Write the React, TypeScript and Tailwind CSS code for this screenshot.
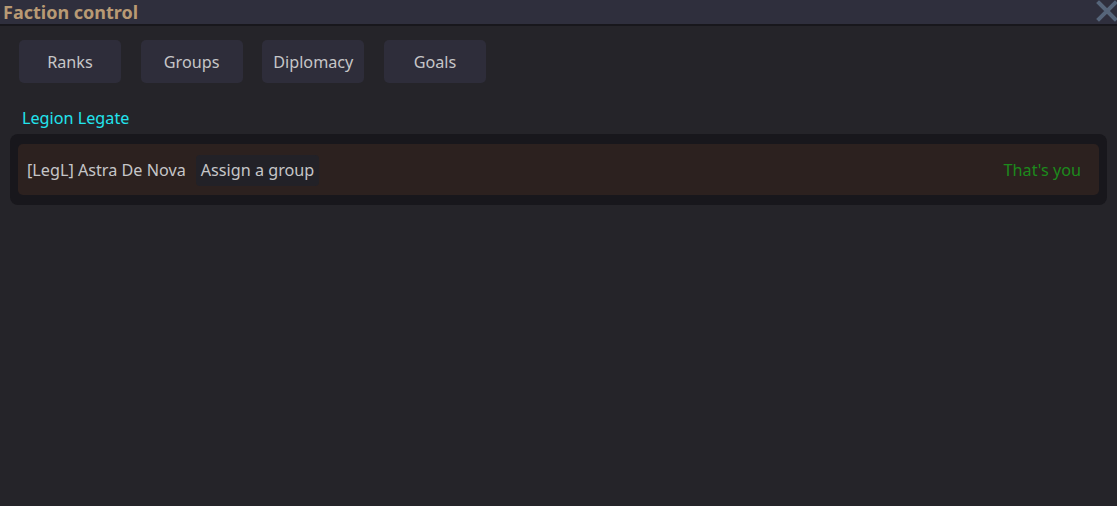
import React from "react";

export default function App() {
  const tabs = ["Ranks", "Groups", "Diplomacy", "Goals"];
  return (
    <div
      className="w-[1117px] h-[506px] bg-[#252429] flex flex-col overflow-hidden"
      style={{ fontFamily: '"Noto Sans", "Open Sans", sans-serif' }}
    >
      <div className="h-[26px] bg-[#2f2f3d] border-b-2 border-[#18171c] flex items-center justify-between pl-[3px]">
        <span className="text-[18px] font-bold text-[#b89a74] leading-none">Faction control</span>
        <svg width="22" height="22" viewBox="0 0 22 22" className="mr-[-1px] mb-[2px]">
          <path d="M3 3 L19 19 M19 3 L3 19" stroke="#56657a" strokeWidth="4" strokeLinecap="square" />
        </svg>
      </div>
      <div className="flex flex-col px-[10px]">
        <div className="flex gap-[19.67px] pl-[9px] mt-[14px]">
          {tabs.map((t) => (
            <div
              key={t}
              className="w-[102px] h-[43px] rounded-[5px] bg-[#2e2d3a] flex items-center justify-center pt-[1px] text-[16.2px] text-[#c6c6c8]"
            >
              {t}
            </div>
          ))}
        </div>
        <div className="mt-[24px] pl-[12px] text-[16.2px] text-[#22e4ee] leading-[22px]">Legion Legate</div>
        <div className="mt-[5px] bg-[#18171c] rounded-[8px] px-[8px] py-[10px]">
          <div className="h-[51px] bg-[#2c211f] rounded-[5px] flex items-center pl-[9px] pr-[18px] pt-[1px] text-[16.2px] text-[#c6c6c8]">
            <span>[LegL] Astra De Nova</span>
            <span className="ml-[10px] bg-[#222127] rounded-[4px] h-[31px] flex items-center px-[5px]">Assign a group</span>
            <span className="ml-auto text-[#1c8a1c]">That's you</span>
          </div>
        </div>
      </div>
    </div>
  );
}
